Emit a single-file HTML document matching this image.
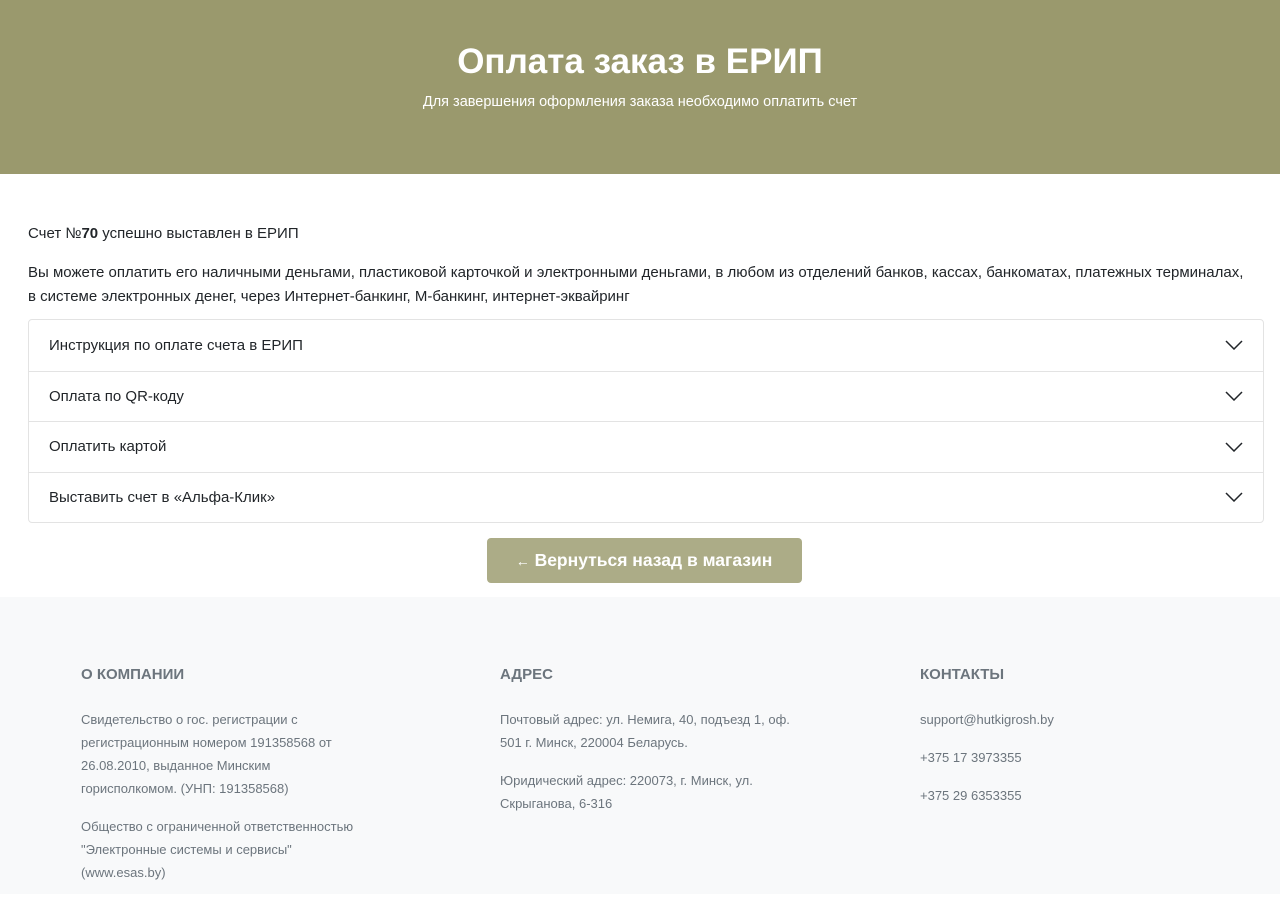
<!DOCTYPE html>
<html><head><meta charset="utf-8"><style>
*{margin:0;padding:0;box-sizing:border-box}
body{width:1280px;height:894px;overflow:hidden;font-family:"Liberation Sans",sans-serif;color:#212529;background:#fff}
.hero{height:174px;background:#9a996d;color:#fff;text-align:center;padding-top:41px}
.hero h1{font-size:35px;font-weight:bold;line-height:42px}
.hero p{font-size:14.5px;margin-top:11px}
.main{padding:48px 16px 0 28px}
.main p{font-size:15px;line-height:24px;padding-right:14px}
.acc{margin-top:10px;border:1px solid #e3e3e3;border-radius:4px}
.item{height:50.5px;border-top:1px solid #e3e3e3;padding:0 20px;display:flex;align-items:center;justify-content:space-between;font-size:15px}
.item:first-child{border-top:none}
.btnw{text-align:center;margin-top:15px;padding-right:4px}
.btn{display:inline-block;background:#acac87;color:#fff;font-weight:bold;font-size:17.5px;width:315px;height:45px;line-height:45px;border-radius:4px}
footer{position:absolute;top:597px;left:0;width:1280px;height:297px;background:#f8f9fa;color:#6c757d}
.col{position:absolute;top:68px;width:285px;font-size:13px;line-height:23px}
.col h4{font-size:15px;font-weight:bold;line-height:20px;margin-bottom:23px;color:#6c757d}
.col p{margin-bottom:15px}
</style></head><body>
<div class="hero"><h1>Оплата заказ в ЕРИП</h1><p>Для завершения оформления заказа необходимо оплатить счет</p></div>
<div class="main">
<p>Счет №<b>70</b> успешно выставлен в ЕРИП</p>
<p style="margin-top:15px">Вы можете оплатить его наличными деньгами, пластиковой карточкой и электронными деньгами, в любом из отделений банков, кассах, банкоматах, платежных терминалах, в системе электронных денег, через Интернет-банкинг, М-банкинг, интернет-эквайринг</p>
<div class="acc">
<div class="item"><span>Инструкция по оплате счета в ЕРИП</span><svg width="18" height="10"><path d="M1 1l8 8 8-8" fill="none" stroke="#212529" stroke-width="1.5"/></svg></div>
<div class="item"><span>Оплата по QR-коду</span><svg width="18" height="10"><path d="M1 1l8 8 8-8" fill="none" stroke="#212529" stroke-width="1.5"/></svg></div>
<div class="item"><span>Оплатить картой</span><svg width="18" height="10"><path d="M1 1l8 8 8-8" fill="none" stroke="#212529" stroke-width="1.5"/></svg></div>
<div class="item"><span>Выставить счет в «Альфа-Клик»</span><svg width="18" height="10"><path d="M1 1l8 8 8-8" fill="none" stroke="#212529" stroke-width="1.5"/></svg></div>
</div>
<div class="btnw"><span class="btn"><span style="font-weight:normal;font-size:14px">←</span> Вернуться назад в магазин</span></div>
</div>
<footer>
<div class="col" style="left:81px"><h4>О КОМПАНИИ</h4><p>Свидетельство о гос. регистрации с регистрационным номером 191358568 от 26.08.2010, выданное Минским горисполкомом. (УНП: 191358568)</p><p>Общество с ограниченной ответственностью "Электронные системы и сервисы" (www.esas.by)</p></div>
<div class="col" style="left:500px;width:300px"><h4>АДРЕС</h4><p>Почтовый адрес: ул. Немига, 40, подъезд 1, оф. 501 г. Минск, 220004 Беларусь.</p><p>Юридический адрес: 220073, г. Минск, ул. Скрыганова, 6-316</p></div>
<div class="col" style="left:920px"><h4>КОНТАКТЫ</h4><p>support@hutkigrosh.by</p><p>+375 17 3973355</p><p>+375 29 6353355</p></div>
</footer>
</body></html>
